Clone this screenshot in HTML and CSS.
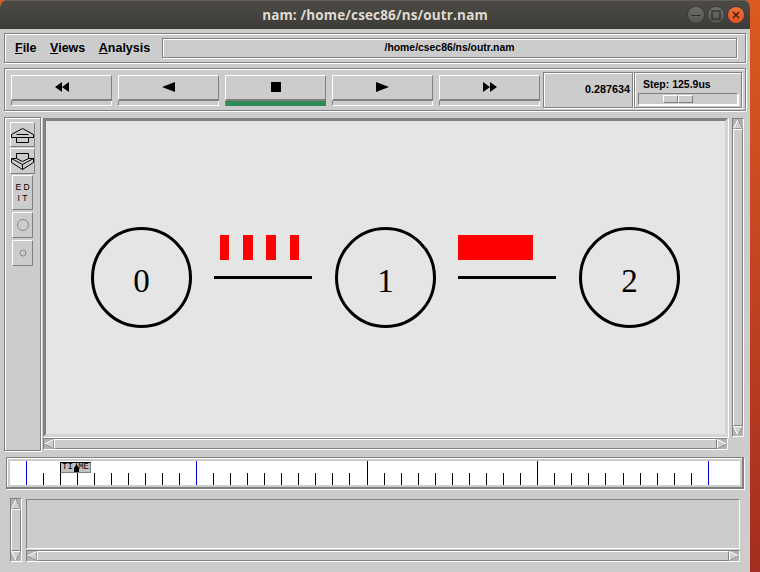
FILE: index.html
```html
<!DOCTYPE html>
<html>
<head>
<meta charset="utf-8">
<title>nam: /home/csec86/ns/outr.nam</title>
<link rel="stylesheet" href="styles.css">
</head>
<body>
<svg class="defs" width="0" height="0">
  <symbol id="a-up" viewBox="0 0 10 10"><path d="M5 0.5L9.5 9.5H0.5Z" fill="#cfcfcf"/><path d="M5 0.5L0.5 9.5" stroke="#fff" fill="none"/><path d="M5 0.5L9.5 9.5H0.5" stroke="#808080" fill="none" stroke-dasharray="2 1"/></symbol>
  <symbol id="a-down" viewBox="0 0 10 10"><path d="M0.5 0.5H9.5L5 9.5Z" fill="#cfcfcf"/><path d="M0.5 0.5H9.5M0.5 0.5L5 9.5" stroke="#fff" fill="none"/><path d="M5 9.5L9.5 0.5" stroke="#808080" fill="none" stroke-dasharray="2 1"/></symbol>
  <symbol id="a-left" viewBox="0 0 10 10"><path d="M0.5 5L9.5 0.5V9.5Z" fill="#cfcfcf"/><path d="M0.5 5L9.5 0.5" stroke="#fff" fill="none"/><path d="M0.5 5L9.5 9.5V0.5" stroke="#808080" fill="none" stroke-dasharray="2 1"/></symbol>
  <symbol id="a-right" viewBox="0 0 10 10"><path d="M0.5 0.5L9.5 5L0.5 9.5Z" fill="#cfcfcf"/><path d="M0.5 9.5V0.5L9.5 5" stroke="#fff" fill="none"/><path d="M9.5 5L0.5 9.5" stroke="#808080" fill="none" stroke-dasharray="2 1"/></symbol>
</svg>
<div class="window">
  <header class="titlebar">
    <span></span>
    <span class="title">nam: /home/csec86/ns/outr.nam</span>
    <div class="wm">
      <span class="wm-btn"><svg width="16" height="16"><path d="M3.5 8.5H12.5" stroke="#2e2d2a" stroke-width="1.2"/></svg></span>
      <span class="wm-btn"><svg width="16" height="16"><rect x="4" y="4" width="8" height="8" fill="none" stroke="#2e2d2a" stroke-width="1.2"/></svg></span>
      <span class="wm-btn wm-close"><svg width="16" height="16"><path d="M5 5L11 11M11 5L5 11" stroke="#3a1a0c" stroke-width="1.4"/></svg></span>
    </div>
  </header>

  <section class="panel menu-panel">
    <nav class="menu">
      <span><u>F</u>ile</span>
      <span><u>V</u>iews</span>
      <span><u>A</u>nalysis</span>
    </nav>
    <div class="filebox">/home/csec86/ns/outr.nam</div>
  </section>

  <section class="panel toolbar">
    <div class="transport">
      <div class="tbtn"><div class="tface"><svg width="14" height="10"><path d="M0 5L7 0V10ZM7 5L14 0V10Z"/></svg></div><div class="tled"></div></div>
      <div class="tbtn"><div class="tface"><svg width="13" height="10"><path d="M0 5L13 0V10Z"/></svg></div><div class="tled"></div></div>
      <div class="tbtn"><div class="tface"><svg width="10" height="10"><rect width="10" height="10"/></svg></div><div class="tled tled-on"></div></div>
      <div class="tbtn"><div class="tface"><svg width="13" height="10"><path d="M13 5L0 0V10Z"/></svg></div><div class="tled"></div></div>
      <div class="tbtn"><div class="tface"><svg width="14" height="10"><path d="M7 5L0 0V10ZM14 5L7 0V10Z"/></svg></div><div class="tled"></div></div>
    </div>
    <div class="clock">0.287634</div>
    <div class="step">
      <div class="step-label">Step: 125.9us</div>
      <div class="trough"><div class="thumb"><i></i><i></i></div></div>
    </div>
  </section>

  <main class="workspace">
    <aside class="tools">
      <button class="tool tool-up"><svg width="23" height="16" viewBox="11 127 23 16"><path d="M22.5 128.5L33.5 134.5V137.5H28.5V142.5H16.5V137.5H11.5V134.5Z M16.5 134.5H28.5 M16.5 137.5H28.5" fill="none" stroke="#000" stroke-width="1"/></svg></button>
      <button class="tool tool-down"><svg width="23" height="18" viewBox="11 152 23 18"><path d="M16.5 153.5H28.5V158.5H33.5V162.5L22.5 169.5L11.5 162.5V158.5H16.5Z M11.5 158.5L22.5 164.5L33.5 158.5 M22.5 164.5V169.5 M16.5 158.5L22.5 161.5L28.5 158.5" fill="none" stroke="#000" stroke-width="1"/></svg></button>
      <button class="tool tool-edit">E D<br>I T</button>
      <button class="tool tool-shape"><svg width="14" height="14"><circle cx="7" cy="7" r="5.5" fill="none" stroke="#888"/></svg></button>
      <button class="tool tool-shape"><svg width="8" height="8"><circle cx="4" cy="4" r="3" fill="none" stroke="#888"/></svg></button>
    </aside>

    <div class="stage">
      <div class="canvas">
        <svg class="net" viewBox="46 121 678 312" preserveAspectRatio="xMinYMin">
          <rect x="220" y="235" width="9" height="25" fill="#f00"/>
          <rect x="243" y="235" width="10" height="25" fill="#f00"/>
          <rect x="266" y="235" width="10" height="25" fill="#f00"/>
          <rect x="290" y="235" width="9" height="25" fill="#f00"/>
          <rect x="458" y="235" width="75" height="25" fill="#f00"/>
          <rect x="214" y="276" width="98" height="3"/>
          <rect x="458" y="276" width="98" height="3"/>
          <circle class="node" cx="141.5" cy="277.5" r="49"/>
          <circle class="node" cx="385.5" cy="277.5" r="49"/>
          <circle class="node" cx="629.5" cy="277.5" r="49"/>
          <text class="label" x="141.5" y="292">0</text>
          <text class="label" x="385.5" y="292">1</text>
          <text class="label" x="629.5" y="292">2</text>
        </svg>
      </div>
      <div class="hscroll">
        <svg class="arrow"><use href="#a-left"/></svg>
        <div class="sb-thumb"></div>
        <svg class="arrow"><use href="#a-right"/></svg>
      </div>
    </div>

    <div class="vscroll">
      <svg class="arrow"><use href="#a-up"/></svg>
      <div class="sb-thumb"></div>
      <svg class="arrow"><use href="#a-down"/></svg>
    </div>
  </main>

  <section class="timeline">
    <div class="timeline-inner">
      <svg class="ticks" width="731" height="24" viewBox="10 461 731 24">
        <path class="tk" d="M43.5 473V485M60.5 473V485M77.5 473V485M94.5 473V485M111.5 473V485M128.5 473V485M145.5 473V485M162.5 473V485M179.5 473V485M213.5 473V485M230.5 473V485M247.5 473V485M264.5 473V485M281.5 473V485M298.5 473V485M315.5 473V485M332.5 473V485M349.5 473V485M384.5 473V485M401.5 473V485M418.5 473V485M435.5 473V485M452.5 473V485M469.5 473V485M486.5 473V485M503.5 473V485M520.5 473V485M554.5 473V485M571.5 473V485M588.5 473V485M605.5 473V485M623.5 473V485M640.5 473V485M657.5 473V485M674.5 473V485M691.5 473V485"/>
        <path class="tk" d="M367.5 461V485M537.5 461V485"/>
        <path class="tk-blue" d="M26.5 461V485M196.5 461V485M708.5 461V485"/>
      </svg>
      <div class="time-flag"><span>TI</span><span>ME</span><svg class="time-pin" width="5" height="11"><path d="M2.5 0L3 4L5 7V11H0V7L2 4Z"/></svg></div>
    </div>
  </section>

  <section class="console">
    <div class="vscroll console-v">
      <svg class="arrow"><use href="#a-up"/></svg>
      <div class="sb-thumb"></div>
      <svg class="arrow"><use href="#a-down"/></svg>
    </div>
    <div class="console-main">
      <div class="console-text"></div>
      <div class="hscroll">
        <svg class="arrow"><use href="#a-left"/></svg>
        <div class="sb-thumb"></div>
        <svg class="arrow"><use href="#a-right"/></svg>
      </div>
    </div>
  </section>
</div>
</body>
</html>
```
FILE: styles.css
```css
* { box-sizing: border-box; }
html, body { margin: 0; padding: 0; }
body {
  width: 760px;
  height: 572px;
  overflow: hidden;
  background: linear-gradient(#dc5a20, #a32d20);
  font-family: "Liberation Sans", Arial, sans-serif;
  color: #000;
}
.defs { position: absolute; }
.window {
  width: 750px;
  height: 572px;
  background: #cccccc;
  border-radius: 7px 7px 0 0;
  overflow: hidden;
}
.titlebar {
  height: 29px;
  display: grid;
  grid-template-columns: 1fr auto 1fr;
  align-items: center;
  padding-right: 6px;
  background: linear-gradient(#4d4b45, #3e3c38);
  box-shadow: inset 0 1px 0 #5e5c55;
}
.title {
  font-family: "Open Sans", "Noto Sans", sans-serif;
  font-weight: 700;
  font-size: 13.5px;
  color: #dfdbd2;
  letter-spacing: 0.15px;
  padding-left: 6px;
}
.wm { display: flex; gap: 4px; justify-content: flex-end; }
.wm-btn {
  width: 16px;
  height: 16px;
  border-radius: 50%;
  background: linear-gradient(#6f6d67, #55534e);
  box-shadow: 0 0 0 1px #3a3935;
  display: block;
}
.wm-btn svg { display: block; }
.wm-close { background: linear-gradient(#f0703c, #e2531f); }

.panel {
  margin-left: 4px;
  width: 742px;
  border: 1px solid #808080;
  box-shadow: inset 1px 1px 0 #fff, 1px 1px 0 #fff;
}
.menu-panel {
  margin-top: 4px;
  height: 30px;
  display: flex;
  align-items: center;
  padding: 0 8px 0 10px;
}
.menu {
  display: flex;
  gap: 13.5px;
  font-size: 12.5px;
  font-weight: 700;
  width: 147px;
  flex: none;
}
.filebox {
  flex: 1;
  height: 20px;
  border: 1px solid #808080;
  box-shadow: inset 1px 1px 0 #fff, 1px 1px 0 #fff;
  font-size: 10.4px;
  font-weight: 700;
  text-align: center;
  line-height: 18px;
}
.toolbar {
  margin-top: 5px;
  height: 43px;
  display: flex;
  padding: 3px 0 0 6px;
}
.transport { display: flex; gap: 6px; padding-top: 3px; }
.tbtn { width: 101px; display: flex; flex-direction: column; }
.tface {
  height: 26px;
  border-top: 1px solid #fff;
  border-left: 1px solid #fff;
  border-right: 1px solid #808080;
  border-bottom: 2px solid #808080;
  display: flex;
  align-items: center;
  justify-content: center;
  padding-bottom: 1px;
}
.tface svg { display: block; }
.tled {
  height: 5px;
  border-left: 1px solid #808080;
  border-right: 1px solid #fff;
  border-bottom: 1px solid #fff;
}
.tled-on { background: #2e8b57; border-color: #808080 #2e8b57 #2e8b57 #808080; }
.clock {
  margin-left: 3px;
  width: 90px;
  height: 36px;
  border: 1px solid #808080;
  box-shadow: inset 1px 1px 0 #fff, 1px 1px 0 #fff;
  font-size: 10.8px;
  font-weight: 700;
  text-align: right;
  padding: 10px 2px 0 0;
}
.step {
  margin-left: 1px;
  width: 108px;
  height: 36px;
  border: 1px solid #808080;
  box-shadow: inset 1px 1px 0 #fff, 1px 1px 0 #fff;
  padding: 5px 3px 0 3px;
}
.step-label { font-size: 10.5px; font-weight: 700; padding-left: 5px; line-height: 13px; }
.trough {
  margin-top: 2px;
  height: 12px;
  border: 1px solid #808080;
  box-shadow: 1px 1px 0 #fff;
  border-bottom-color: #fff;
  border-right-color: #fff;
  padding: 1px 0 0 24px;
}
.thumb { display: flex; width: 30px; height: 8px; }
.thumb i {
  flex: 1;
  border-top: 1px solid #fff;
  border-left: 1px solid #fff;
  border-right: 1px solid #808080;
  border-bottom: 1px solid #808080;
}

.workspace {
  margin: 6px 2px 0 4px;
  height: 334px;
  display: flex;
}
.tools {
  width: 37px;
  height: 334px;
  border: 1px solid #808080;
  box-shadow: inset 1px 1px 0 #fff, 1px 1px 0 #fff;
  display: flex;
  flex-direction: column;
  align-items: center;
  padding-top: 4px;
  gap: 1px;
}
.tool {
  margin: 0;
  padding: 0;
  background: none;
  border: 1px solid;
  border-color: #fff #808080 #808080 #fff;
  display: flex;
  align-items: center;
  justify-content: center;
  font-family: "Liberation Sans", sans-serif;
  color: #000;
}
.tool svg { display: block; }
.tool-up { width: 25px; height: 25px; }
.tool-down { width: 25px; height: 26px; }
.tool-edit { width: 21px; height: 35px; font-size: 8.5px; line-height: 11px; display: block; }
.tool-shape { width: 21px; height: 26px; margin-top: 1px; }

.stage { margin: 1px 0 0 2px; width: 685px; }
.canvas {
  height: 319px;
  border: 3px solid;
  border-color: #808080 #d4d4d4 #d4d4d4 #808080;
  background: #e5e5e5;
  box-shadow: 1px 1px 0 #fff;
}
.net { display: block; width: 678px; height: 312px; }
.node { fill: none; stroke: #000; stroke-width: 3; }
.label { font-family: "Liberation Serif", serif; font-size: 33px; text-anchor: middle; }

.hscroll, .vscroll {
  display: flex;
  border: 1px solid;
  border-color: #808080 #fff #fff #808080;
}
.hscroll { height: 12px; margin-top: 1px; }
.hscroll .sb-thumb { flex: 1; height: 100%; }
.vscroll { flex-direction: column; width: 12px; height: 319px; margin: 1px 0 0 4px; }
.vscroll .sb-thumb { flex: 1; width: 100%; }
.arrow {
  width: 10px;
  height: 10px;
  display: block;
  flex: none;
  background: #b2b2b2;
}
.sb-thumb {
  border: 1px solid;
  border-color: #fff #808080 #808080 #fff;
}

.timeline {
  margin: 6px 0 0 6px;
  width: 738px;
  height: 32px;
  border: 1px solid #808080;
  border-width: 1px 2px 2px 1px;
  box-shadow: inset 1px 1px 0 #fff, 1px 1px 0 #fff;
  padding: 3px 2px 3px 3px;
}
.timeline-inner {
  position: relative;
  height: 24px;
  background: #fff;
}
.ticks { display: block; }
.tk { stroke: #000; fill: none; }
.tk-blue { stroke: #0000e0; fill: none; }
.time-flag {
  position: absolute;
  left: 50px;
  top: 1px;
  width: 31px;
  height: 11px;
  background: #c0c0c0;
  border: 1px solid #000;
  border-right-color: #808080;
  border-bottom-color: #808080;
  display: flex;
  justify-content: space-between;
  font-family: "Liberation Mono", monospace;
  font-size: 9px;
  line-height: 9px;
  padding: 0 1px;
}
.time-pin { position: absolute; left: 13px; top: -2px; display: block; }

.console {
  margin: 8px 0 0 10px;
  display: flex;
  gap: 4px;
  height: 65px;
}
.console-v { height: 64px; margin: 1px 0 0 0; }
.console-main { width: 714px; padding-top: 2px; }
.console-text {
  height: 50px;
  border: 1px solid;
  border-color: #808080 #fff #fff #808080;
}
.console-main .hscroll { margin-top: 1px; }
```
